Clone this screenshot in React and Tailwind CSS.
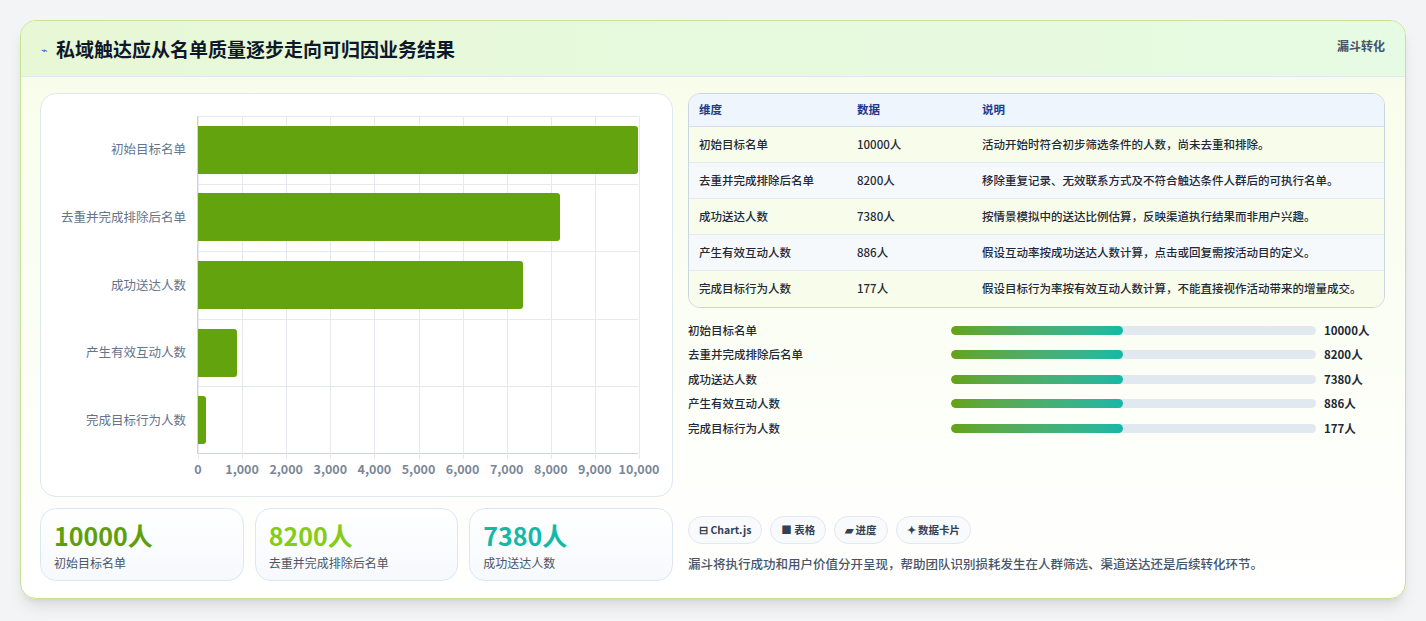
import React from "react";

const rows = [
  ["初始目标名单", 10000, "活动开始时符合初步筛选条件的人数，尚未去重和排除。"],
  ["去重并完成排除后名单", 8200, "移除重复记录、无效联系方式及不符合触达条件人群后的可执行名单。"],
  ["成功送达人数", 7380, "按情景模拟中的送达比例估算，反映渠道执行结果而非用户兴趣。"],
  ["产生有效互动人数", 886, "假设互动率按成功送达人数计算，点击或回复需按活动目的定义。"],
  ["完成目标行为人数", 177, "假设目标行为率按有效互动人数计算，不能直接视作活动带来的增量成交。"],
];
const ticks = ["0", "1,000", "2,000", "3,000", "4,000", "5,000", "6,000", "7,000", "8,000", "9,000", "10,000"];

function Chart() {
  return (
    <div className="h-[404px] rounded-2xl border border-[#dfe7ef] bg-white pl-3 pr-[34px] pt-[22px]">
      <div className="flex">
        <div className="w-[145px] flex flex-col pr-[11px]">
          {rows.map((r) => (
            <div key={r[0]} className="h-[67.6px] flex items-center justify-end text-[12.5px] text-[#64748b]">{r[0]}</div>
          ))}
        </div>
        <div className="relative w-[441px] h-[338px] border-l border-b border-[#cbd5e1]">
          {ticks.map((t, i) => (
            <div key={t} className="absolute top-0 bottom-[-6px] w-px bg-[#e5e9ef]" style={{ left: i * 44.1 }} />
          ))}
          <div className="absolute left-0 right-0 top-0 h-px bg-[#e5e9ef]" />
          {[1, 2, 3, 4].map((i) => (
            <div key={i} className="absolute left-0 right-0 h-px bg-[#e5e9ef]" style={{ top: i * 67.6 }} />
          ))}
          <div className="relative flex flex-col">
            {rows.map((r) => (
              <div key={r[0]} className="h-[67.6px] flex items-center">
                <div className="h-[48px] bg-[#62a30e] rounded-r-[3px]" style={{ width: Math.max(r[1] * 0.0441, 6) }} />
              </div>
            ))}
          </div>
          <div className="absolute top-[344px] left-0 w-full">
            {ticks.map((t, i) => (
              <span key={t} className="absolute -translate-x-1/2 text-[12.5px] font-semibold text-[#7b8797]" style={{ left: i * 44.1 }}>{t}</span>
            ))}
          </div>
        </div>
      </div>
    </div>
  );
}

function Stat({ v, label, color }) {
  return (
    <div className="flex-1 h-[73px] rounded-2xl border border-[#dbe7f3] bg-gradient-to-b from-white to-[#f6f9fd] px-[13px] pt-[10px]">
      <div className={`text-[25px] font-bold leading-[32px] ${color}`}>{v}</div>
      <div className="text-[12px] text-[#4b5563] mt-[3px]">{label}</div>
    </div>
  );
}

export default function App() {
  return (
    <div className="min-h-[621px] bg-[#f3f4f5] p-5 pb-0" style={{ fontFamily: '"Noto Sans CJK SC", "Noto Sans", sans-serif' }}>
      <div className="h-[579px] rounded-2xl border border-[#c5e48b] bg-gradient-to-b from-[#f7fde9] to-white shadow-lg overflow-hidden">
        <div className="h-[56px] border-b border-[#e2e8f0] bg-gradient-to-r from-[#e8f8d6] to-[#e6fbe3] flex items-start justify-between px-5">
          <div className="flex items-center gap-2 h-[56px]">
            <span className="text-[11px] text-[#2563eb]">⌁</span>
            <h1 className="text-[19px] font-bold text-[#0f172a]">私域触达应从名单质量逐步走向可归因业务结果</h1>
          </div>
          <span className="text-[12px] font-semibold text-[#475569] mt-[16px]">漏斗转化</span>
        </div>
        <div className="flex gap-[15px] px-[19px] pt-4">
          <div className="w-[633px] flex flex-col gap-[11px]">
            <Chart />
            <div className="flex gap-[11px]">
              <Stat v="10000人" label="初始目标名单" color="text-[#5f9e0d]" />
              <Stat v="8200人" label="去重并完成排除后名单" color="text-[#84cc16]" />
              <Stat v="7380人" label="成功送达人数" color="text-[#14b8a6]" />
            </div>
          </div>
          <div className="flex-1 pr-[1px]">
            <div className="rounded-xl border border-[#cbd5e1] overflow-hidden text-[11.5px] text-[#1f2937]">
              <div className="flex h-[33px] items-center bg-[#eef5fd] border-b border-[#d4dde8] font-semibold text-[#1e3a8a]">
                <div className="w-[168px] pl-[10px]">维度</div>
                <div className="w-[125px]">数据</div>
                <div className="flex-1">说明</div>
              </div>
              {rows.map((r, i) => (
                <div key={r[0]} className={`flex py-[9px] ${i % 2 ? "bg-[#f6f9fc]" : "bg-[#f8fdeb]"} ${i < 4 ? "border-b border-[#e5eaf0]" : ""} ${i === 4 ? "pb-[10px]" : ""}`}>
                  <div className="w-[168px] pl-[10px] leading-[17px] font-medium">{r[0]}</div>
                  <div className="w-[125px] leading-[17px] font-medium">{r[1]}人</div>
                  <div className="flex-1 pr-5 leading-[17px] font-medium">{r[2]}</div>
                </div>
              ))}
            </div>
            <div className="mt-[10px] flex flex-col">
              {rows.map((r) => (
                <div key={r[0]} className="h-[24.5px] flex items-center text-[11.5px] font-medium text-[#1f2937]">
                  <div className="w-[263px]">{r[0]}</div>
                  <div className="w-[365px] h-[9px] rounded-full bg-[#e2e8f0] overflow-hidden">
                    <div className="h-full w-[172px] rounded-full bg-gradient-to-r from-[#65a30d] to-[#14b8a6]" />
                  </div>
                  <div className="ml-2 font-bold">{r[1]}人</div>
                </div>
              ))}
            </div>
            <div className="mt-[75px] flex gap-2">
              {["⊟ Chart.js", "■ 表格", "▰ 进度", "✦ 数据卡片"].map((p) => (
                <span key={p} className="h-[28px] px-[10px] flex items-center rounded-full border border-[#e2e8f0] bg-[#f8fafc] text-[10.5px] font-semibold text-[#334155]">{p}</span>
              ))}
            </div>
            <p className="mt-[11px] text-[12.5px] font-medium text-[#475569]">漏斗将执行成功和用户价值分开呈现，帮助团队识别损耗发生在人群筛选、渠道送达还是后续转化环节。</p>
          </div>
        </div>
      </div>
    </div>
  );
}
